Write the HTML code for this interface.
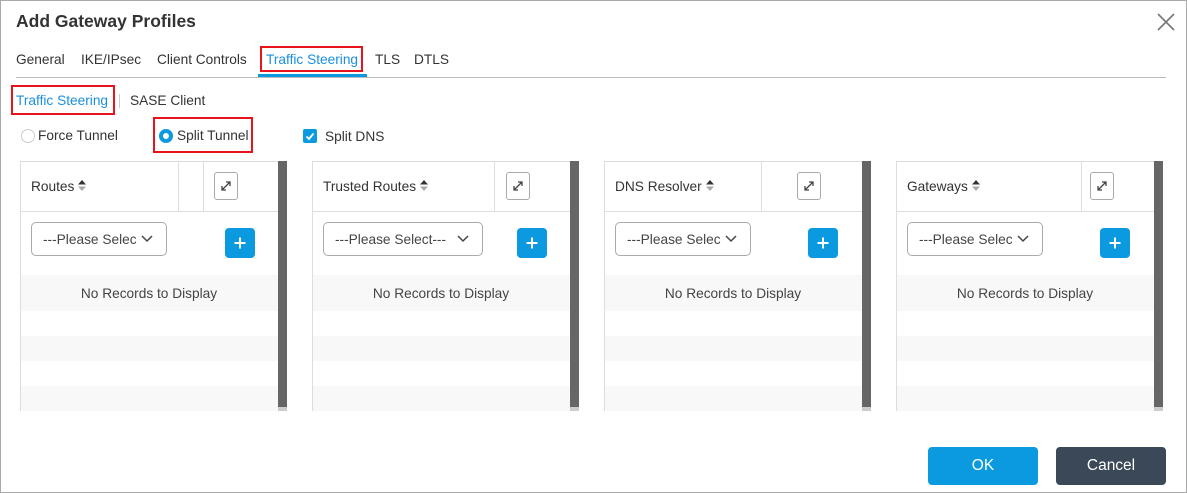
<!DOCTYPE html>
<html><head><style>
*{box-sizing:border-box;margin:0;padding:0}
body{width:1187px;height:493px;background:#fff;font-family:"Liberation Sans",sans-serif;color:#333;position:relative;overflow:hidden}
.a{position:absolute}
.frame{left:0;top:0;width:1187px;height:493px;border:1px solid #a9a9a9}
.t{font-size:13.7px;white-space:nowrap}
.red{border:2px solid #e8131b}
.blue{color:#1a8fe0}
.p{top:161px;height:250px;border-left:1px solid #ddd}
.hl{height:1px;background:#ddd}
.vl{width:1px;background:#ddd;top:161px;height:50px}
.sb{background:#666;width:9px;top:161px;height:246px}
.sb2{background:#ccc;width:9px;top:407px;height:4px}
.ex{width:24px;height:28px;border:1px solid #aaa;border-radius:3px;top:172px;background:#fff}
.sel{top:222px;height:34px;border:1px solid #aaa;border-radius:5px;font-size:13.7px;padding:9px 0 0 11px;color:#444;white-space:nowrap;overflow:hidden}
.plus{top:228px;width:30px;height:30px;background:#0b9ae0;border-radius:4px}
.g{background:#f8f8f8;height:36px}
</style></head><body>
<div class="a frame"></div>
<div class="a" style="left:16px;top:11px;font-size:17.5px;font-weight:bold;color:#333">Add Gateway Profiles</div>
<svg class="a" style="left:1157px;top:13px" width="18" height="18"><path d="M1 1L17 17M17 1L1 17" stroke="#777" stroke-width="1.6"/></svg>
<div class="a t" style="left:16px;top:52px">General</div>
<div class="a t" style="left:81px;top:52px">IKE/IPsec</div>
<div class="a t" style="left:157px;top:52px">Client Controls</div>
<div class="a red" style="left:260px;top:46px;width:103px;height:26px"></div>
<div class="a t blue" style="left:266px;top:52px">Traffic Steering</div>
<div class="a t" style="left:375px;top:52px">TLS</div>
<div class="a t" style="left:414px;top:52px">DTLS</div>
<div class="a" style="left:16px;top:77px;width:1150px;height:1px;background:#bbb"></div>
<div class="a" style="left:258px;top:74px;width:109px;height:3px;background:#0b9ae0"></div>
<div class="a red" style="left:11px;top:85px;width:104px;height:30px"></div>
<div class="a t blue" style="left:16px;top:93px">Traffic Steering</div>
<div class="a" style="left:119px;top:94px;width:1px;height:14px;background:#ccc"></div>
<div class="a t" style="left:130px;top:93px">SASE Client</div>
<div class="a" style="left:21px;top:129px;width:14px;height:14px;border:1px solid #ccc;border-radius:50%"></div>
<div class="a t" style="left:38px;top:128px">Force Tunnel</div>
<div class="a red" style="left:153px;top:117px;width:100px;height:36px"></div>
<div class="a" style="left:159px;top:129px;width:14px;height:14px;border:4px solid #0b9ae0;border-radius:50%"></div>
<div class="a t" style="left:177px;top:128px">Split Tunnel</div>
<div class="a" style="left:303px;top:129px;width:14px;height:14px;background:#0b9ae0;border-radius:2px"></div>
<svg class="a" style="left:303px;top:129px" width="14" height="14"><path d="M3.5 7.5L6 10L10.5 4.5" stroke="#fff" stroke-width="1.8" fill="none"/></svg>
<div class="a t" style="left:325px;top:129px">Split DNS</div>

<div id="panels"></div>
<script>
var P=[[20,"Routes",[178,203],214,136,"---Please Selec",225],[312,"Trusted Routes",[494],506,160,"---Please Select---",517],[604,"DNS Resolver",[761],797,136,"---Please Selec",808],[896,"Gateways",[1081],1090,136,"---Please Selec",1100]];
var h="";
P.forEach(function(p){var L=p[0];
h+='<div class="a p" style="left:'+L+'px;width:258px"></div>';
h+='<div class="a hl" style="left:'+L+'px;top:161px;width:258px"></div>';
h+='<div class="a hl" style="left:'+L+'px;top:211px;width:258px"></div>';
p[2].forEach(function(x){h+='<div class="a vl" style="left:'+x+'px"></div>'});
h+='<div class="a t" style="left:'+(L+11)+'px;top:179px;color:#333">'+p[1]+'<svg style="margin-left:4px;vertical-align:0" width="8" height="11"><path d="M0 4.5L4 0L8 4.5Z" fill="#333"/><path d="M0 6.5L4 11L8 6.5Z" fill="#aaa"/></svg></div>';
h+='<div class="a ex" style="left:'+p[3]+'px"><svg width="22" height="26"><path d="M7 17L15 9M11 9H15V13M7 13V17H11" stroke="#444" stroke-width="1.3" fill="none"/></svg></div>';
h+='<div class="a sel" style="left:'+(L+11)+'px;width:'+p[4]+'px">'+p[5]+'</div>';
h+='<div class="a" style="left:'+(L+11+p[4]-30)+'px;top:223px;width:29px;height:32px;background:#fff;border-radius:0 5px 5px 0"></div>';
h+='<svg class="a" style="left:'+(L+11+p[4]-26)+'px;top:235px" width="12" height="8"><path d="M1 1L6 6L11 1" stroke="#444" stroke-width="1.5" fill="none"/></svg>';
h+='<div class="a plus" style="left:'+p[6]+'px"><svg width="30" height="30"><path d="M15 9.5V20.5M9.5 15H20.5" stroke="#fff" stroke-width="2"/></svg></div>';
h+='<div class="a g" style="left:'+(L+1)+'px;top:275px;width:257px"></div>';
h+='<div class="a t" style="left:'+L+'px;top:286px;width:258px;text-align:center;color:#444">No Records to Display</div>';
h+='<div class="a g" style="left:'+(L+1)+'px;top:336px;width:257px;height:25px"></div>';
h+='<div class="a g" style="left:'+(L+1)+'px;top:386px;width:257px;height:25px"></div>';
h+='<div class="a sb" style="left:'+(L+258)+'px"></div><div class="a sb2" style="left:'+(L+258)+'px"></div>';
});
document.getElementById("panels").innerHTML=h;
</script>
<div class="a" style="left:928px;top:447px;width:110px;height:38px;background:#0b9ae0;border-radius:4px;color:#fff;font-size:15.5px;text-align:center;line-height:38px">OK</div>
<div class="a" style="left:1056px;top:447px;width:110px;height:38px;background:#3a4858;border-radius:4px;color:#fff;font-size:15.5px;text-align:center;line-height:38px">Cancel</div>
</body></html>
